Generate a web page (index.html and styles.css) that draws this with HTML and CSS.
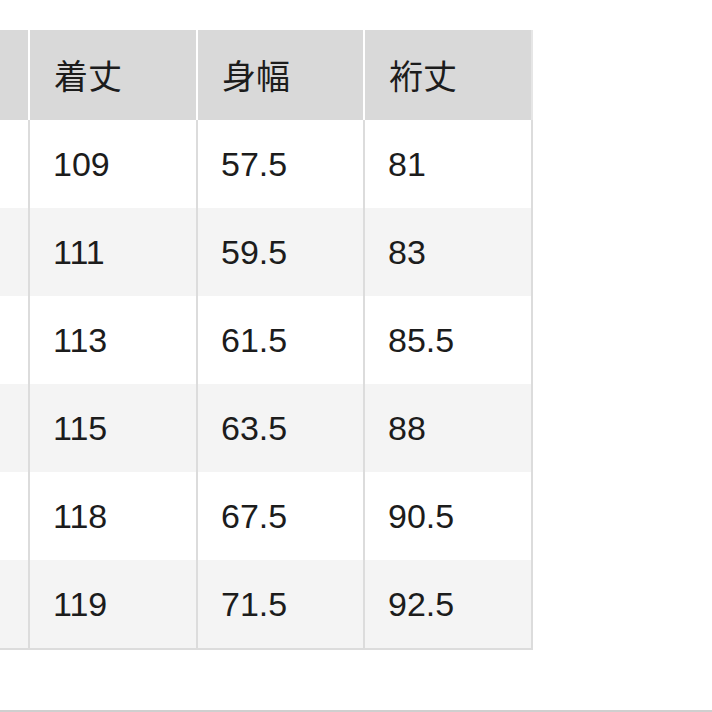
FILE: index.html
```html
<!DOCTYPE html>
<html lang="ja">
<head>
<meta charset="utf-8">
<title>サイズ表</title>
<link rel="stylesheet" href="styles.css">
</head>
<body>
<div class="page">
  <div class="table">
    <div class="row head">
      <div class="cell stub"></div>
      <div class="cell">着丈</div>
      <div class="cell">身幅</div>
      <div class="cell">裄丈</div>
    </div>
    <div class="row body">
      <div class="cell stub"></div>
      <div class="cell">109</div>
      <div class="cell">57.5</div>
      <div class="cell">81</div>
    </div>
    <div class="row body">
      <div class="cell stub"></div>
      <div class="cell">111</div>
      <div class="cell">59.5</div>
      <div class="cell">83</div>
    </div>
    <div class="row body">
      <div class="cell stub"></div>
      <div class="cell">113</div>
      <div class="cell">61.5</div>
      <div class="cell">85.5</div>
    </div>
    <div class="row body">
      <div class="cell stub"></div>
      <div class="cell">115</div>
      <div class="cell">63.5</div>
      <div class="cell">88</div>
    </div>
    <div class="row body">
      <div class="cell stub"></div>
      <div class="cell">118</div>
      <div class="cell">67.5</div>
      <div class="cell">90.5</div>
    </div>
    <div class="row body">
      <div class="cell stub"></div>
      <div class="cell">119</div>
      <div class="cell">71.5</div>
      <div class="cell">92.5</div>
    </div>
  </div>
  <div class="rule"></div>
</div>
</body>
</html>
```

FILE: styles.css
```css
html, body {
  margin: 0;
  padding: 0;
  background: #ffffff;
}

.page {
  padding-top: 30px;
  width: 712px;
}

.table {
  width: 533px;
  color: #1c1c1c;
  font-family: "Liberation Sans", "Noto Sans CJK JP", Arial, sans-serif;
}

.row {
  display: grid;
  grid-template-columns: 28px 168px 167px 170px;
}

.cell {
  box-sizing: border-box;
  display: flex;
  align-items: center;
  padding-left: 23px;
  border-left: 2px solid #dcdcdc;
  font-size: 34px;
  line-height: 1;
}

.cell.stub {
  border-left: 0;
  padding-left: 0;
}

.cell:last-child {
  border-right: 2px solid #dcdcdc;
}

.head {
  height: 90px;
}

.head .cell {
  background: #d9d9d9;
  border-left-color: #ffffff;
  font-family: "Noto Sans CJK JP", "Liberation Sans", sans-serif;
  font-size: 34px;
  padding-left: 24px;
  padding-bottom: 0;
}

.head .cell.stub {
  border-left: 0;
}

.head .cell:last-child {
  border-right-color: #e6e6e6;
}

.body {
  height: 88px;
  background: #ffffff;
}

.body:nth-child(odd) {
  background: #f4f4f4;
}

.body:last-child {
  height: 90px;
  border-bottom: 2px solid #dcdcdc;
  box-sizing: border-box;
}

.rule {
  margin-top: 60px;
  height: 2px;
  background: #cfcfcf;
}
```
